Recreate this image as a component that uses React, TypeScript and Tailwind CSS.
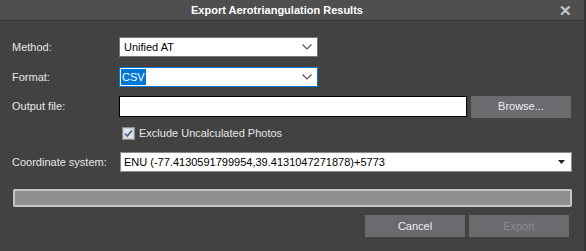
import React from 'react';

function Chevron() {
  return (
    <svg width="10" height="6" viewBox="0 0 10 6" className="shrink-0">
      <path d="M0.5 0.5 L5 5 L9.5 0.5" fill="none" stroke="#555" strokeWidth="1.2" />
    </svg>
  );
}

function Caret() {
  return (
    <svg width="7" height="4" viewBox="0 0 7 4" className="shrink-0">
      <path d="M0 0 H7 L3.5 4 Z" fill="#222" />
    </svg>
  );
}

function CheckBox() {
  return (
    <svg width="13" height="13" viewBox="0 0 13 13" className="shrink-0">
      <rect x="0.5" y="0.5" width="12" height="12" fill="#c9ccd3" stroke="#8b8d93" />
      <rect x="2" y="2" width="9" height="9" fill="#dfe3ea" />
      <path d="M3 6.5 L5.2 9 L10 3.5" fill="none" stroke="#4a5e86" strokeWidth="1.6" />
    </svg>
  );
}

export default function App() {
  return (
    <div
      className="flex h-[251px] w-[586px] flex-col overflow-hidden border-r-2 border-[#353535] bg-[#424242] text-[11px] text-[#e6e6e6]"
      style={{ fontFamily: '"Liberation Sans", Arial, sans-serif' }}
    >
      <div className="flex h-[21px] shrink-0 items-center border-b border-[#383838] bg-[#4f4f4f] pl-[191px] pr-[12px]">
        <span className="flex-1 font-bold text-white">Export Aerotriangulation Results</span>
        <span className="text-[15px] font-bold leading-none text-[#c8c8c8]">✕</span>
      </div>

      <div className="flex flex-col px-[12px] pt-[16px]">
        <div className="flex h-[20px] items-center">
          <label className="w-[107px]">Method:</label>
          <div className="flex h-[20px] w-[199px] items-center justify-between border border-[#7a7a7a] bg-white pl-[4px] pr-[5px] text-black">
            <span>Unified AT</span>
            <Chevron />
          </div>
        </div>

        <div className="mt-[10px] flex h-[20px] items-center">
          <label className="w-[107px]">Format:</label>
          <div className="flex h-[20px] w-[199px] items-center justify-between border border-[#0078d7] bg-white pl-[1px] pr-[5px] text-black">
            <span className="bg-[#0078d7] px-[1px] text-white">CSV</span>
            <Chevron />
          </div>
        </div>

        <div className="mt-[9px] flex h-[21px] items-center">
          <label className="w-[107px]">Output file:</label>
          <div className="h-[21px] w-[348px] border border-black bg-white" />
          <button className="ml-[4px] h-[22px] w-[100px] bg-[#6a6a6f] text-[#f0f0f0]">Browse...</button>
        </div>

        <div className="mt-[9px] flex h-[14px] items-center pl-[110px]">
          <CheckBox />
          <span className="ml-[4px]">Exclude Uncalculated Photos</span>
        </div>

        <div className="mt-[12px] flex h-[20px] items-center">
          <label className="w-[108px]">Coordinate system:</label>
          <div className="flex h-[20px] w-[452px] items-center justify-between border border-[#8a8a8a] bg-white pl-[3px] pr-[6px] text-black">
            <span>ENU (-77.4130591799954,39.4131047271878)+5773</span>
            <Caret />
          </div>
        </div>

        <div className="ml-[1px] mt-[17px] h-[18px] w-[559px] rounded-[2px] border-2 border-[#c6c6c6] bg-[#8e8e8e]" />

        <div className="mt-[8px] flex justify-end gap-[4px] pr-[3px]">
          <button className="h-[22px] w-[100px] bg-[#6a6a6f] text-[#f0f0f0]">Cancel</button>
          <button className="h-[22px] w-[100px] bg-[#6a6a6f] text-[#8c8c90]">Export</button>
        </div>
      </div>
    </div>
  );
}
